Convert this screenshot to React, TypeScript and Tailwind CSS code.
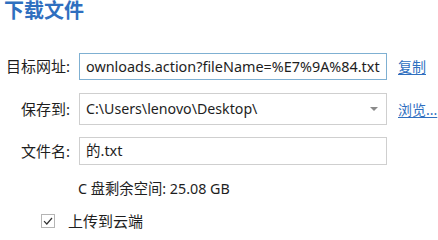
import React from 'react';

const font = { fontFamily: '"Noto Sans", "Noto Sans CJK SC", sans-serif' };

export default function App() {
  return (
    <div className="w-[438px] h-[235px] bg-white overflow-hidden text-[#1e1e1e]" style={font}>
      <h1 className="pl-[4px] text-[20px] leading-[22px] font-bold text-[#2f6fbf]">下载文件</h1>

      <div className="mt-[31px] flex items-center h-[27px]">
        <span className="w-[71px] text-right text-[15px] pr-[1px]">目标网址:</span>
        <div className="ml-[8px] w-[308px] h-[27px] border border-[#7fb0d2] flex items-center pl-[6px] overflow-hidden whitespace-nowrap text-[14.4px]">
          ownloads.action?fileName=%E7%9A%84.txt
        </div>
        <a className="ml-[11px] text-[14px] text-[#2f6fbf] underline underline-offset-2">复制</a>
      </div>

      <div className="mt-[13px] flex items-center h-[32px]">
        <span className="w-[71px] text-right text-[15px] pr-[1px]">保存到:</span>
        <div className="ml-[8px] w-[308px] h-[32px] border border-[#cfcfcf] flex items-center pl-[6px] pr-[8px] text-[14.2px]">
          <span className="flex-1 whitespace-nowrap">C:\Users\lenovo\Desktop\</span>
          <span className="w-0 h-0 border-l-[4px] border-r-[4px] border-t-[4px] border-l-transparent border-r-transparent border-t-[#8a8a8a]" />
        </div>
        <a className="ml-[11px] text-[14px] text-[#2f6fbf] underline underline-offset-2 whitespace-nowrap">浏览...</a>
      </div>

      <div className="mt-[12px] flex items-center h-[28px]">
        <span className="w-[71px] text-right text-[15px] pr-[1px]">文件名:</span>
        <div className="ml-[8px] w-[308px] h-[28px] border border-[#cfcfcf] flex items-center pl-[6px] text-[14.5px]">
          的.txt
        </div>
      </div>

      <div className="mt-[14px] pl-[78px] text-[14.3px] leading-[20px]">C 盘剩余空间: 25.08 GB</div>

      <label className="mt-[12px] ml-[41px] flex items-center">
        <span className="w-[14px] h-[14px] border border-[#b5b5b5] flex items-center justify-center">
          <svg width="10" height="10" viewBox="0 0 10 10" fill="none">
            <path d="M1 5.2 L3.8 8 L9 2" stroke="#333" strokeWidth="1.2" />
          </svg>
        </span>
        <span className="ml-[13px] text-[15px] leading-[20px]">上传到云端</span>
      </label>
    </div>
  );
}
